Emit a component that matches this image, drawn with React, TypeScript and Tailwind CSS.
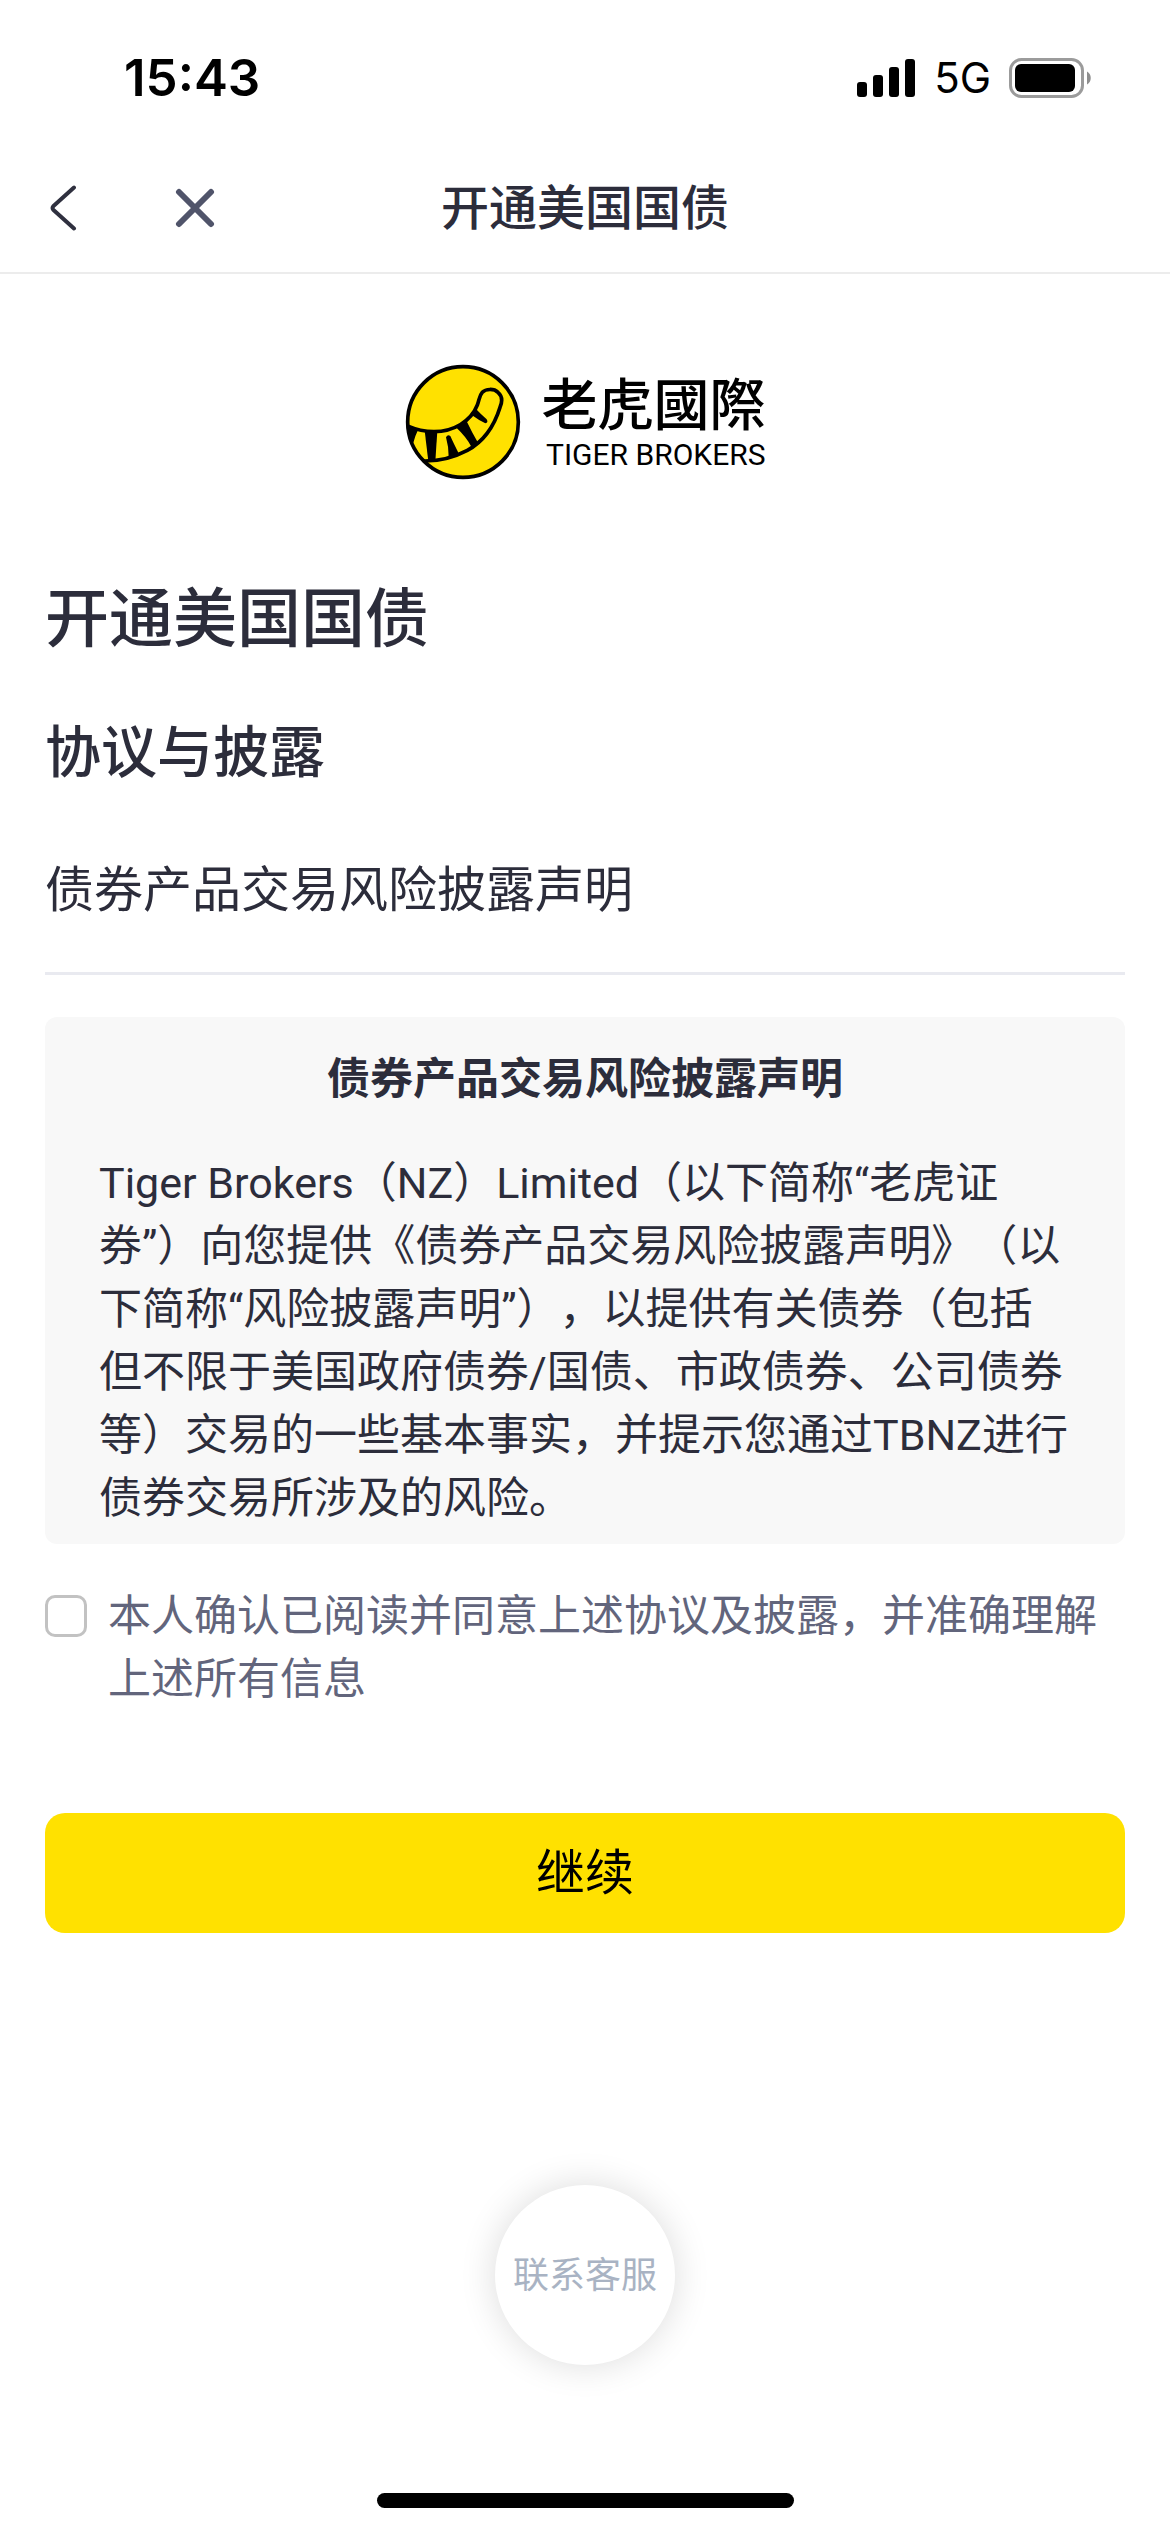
import { useState } from 'react';

const StatusBar = () => (
    <div className="flex h-[144px] items-center justify-between pt-3 pr-[78px] pl-[124px] text-black">
        <span className="text-[51px] leading-[60px] font-semibold">15:43</span>
        <div className="flex items-center gap-[18px]">
            <svg className="h-[38px] w-[59px]" viewBox="0 0 59 38" fill="currentColor">
                <rect x="0" y="23" width="10" height="15" rx="3" />
                <rect x="16" y="16" width="10" height="22" rx="3" />
                <rect x="32" y="8" width="10" height="30" rx="3" />
                <rect x="48" y="0" width="10" height="38" rx="3" />
            </svg>
            <span className="text-[42px] leading-[60px]">5G</span>
            <svg className="h-[40px] w-[83px]" viewBox="0 0 83 40">
                <rect x="1.5" y="1.5" width="72" height="37" rx="11" fill="none" stroke="#9b9b9b" strokeWidth="3" />
                <rect x="6" y="6" width="60" height="28" rx="6" fill="#000" />
                <path d="M78 13.5c5 2.500 5 10.500 0 13z" fill="#8e8e8e" />
            </svg>
        </div>
    </div>
);

const NavBar = () => (
    <header className="grid h-[130px] grid-cols-[1fr_auto_1fr] items-center border-b-2 border-[#ececec]">
        <div className="flex items-center gap-[98px] pl-[49px]">
            <button type="button" aria-label="返回">
                <svg className="h-[46px] w-[28px]" viewBox="0 0 28 46" fill="none" stroke="#2f303f" strokeWidth="4" strokeLinecap="round" strokeLinejoin="round">
                    <path d="M25 2.500 4.500 21Q2.500 23 4.500 25L25 43.500" />
                </svg>
            </button>
            <button type="button" aria-label="关闭">
                <svg className="h-[40px] w-[40px]" viewBox="0 0 40 40" fill="none" stroke="#50546a" strokeWidth="6" strokeLinecap="round">
                    <path d="M4 4 36 36M36 4 4 36" />
                </svg>
            </button>
        </div>
        <span className="text-[48px] leading-[60px] font-medium">开通美国国债</span>
    </header>
);

const Logo = () => (
    <div className="flex items-center justify-center gap-[21px] text-black">
        <svg className="h-[116px] w-[116px]" viewBox="45 70 348 348">
            <clipPath id="coin">
                <circle cx="219" cy="244" r="168" />
            </clipPath>
            <circle cx="219" cy="244" r="166" fill="#ffe100" />
            <g clipPath="url(#coin)">
                <path
                    d="M50 255Q92 273 132 273C190 273 243 242 262 193C268 178 267 166 277 155C287 144 312 143 324 155C338 167 336 186 330 200C312 258 280 303 232 329C190 351 150 362 100 361"
                    fill="none"
                    stroke="#000"
                    strokeWidth="11"
                />
                <path d="M50 250 84 268Q76 284 70 306L56 300Z" />
                <path d="M104 270H142L136 362H115Z" />
                <path d="M168 290Q173 280 181 286Q190 306 206 338L176 348Q176 318 168 290Z" />
                <path d="M200 262 230 242Q244 272 264 306L244 318Q228 288 200 262Z" />
                <path d="M244 216 258 205Q274 222 290 236Q296 246 286 248Q266 238 244 222Z" />
            </g>
            <circle cx="219" cy="244" r="166" fill="none" stroke="#000" strokeWidth="11" />
        </svg>
        <div className="flex flex-col items-end gap-[6px]">
            <span className="font-['Noto_Sans_CJK_TC',sans-serif] text-[56px] leading-[60px] font-medium">老虎國際</span>
            <span className="font-[Roboto,sans-serif] text-[30px] leading-[36px]">TIGER BROKERS</span>
        </div>
    </div>
);

export default function App() {
    const [agreed, setAgreed] = useState(false);

    return (
        <div className="flex min-h-screen flex-col bg-white font-[Inter,'Noto_Sans_CJK_SC',sans-serif] text-[#2c2d3b] [text-spacing-trim:space-all]">
            <StatusBar />
            <NavBar />

            <main className="flex flex-1 flex-col px-[45px] pt-[90px]">
                <Logo />

                <h1 className="mt-[90px] text-[64px] leading-[96px] font-medium">开通美国国债</h1>
                <h2 className="mt-[44px] text-[56px] leading-[84px] font-medium">协议与披露</h2>
                <h3 className="mt-[60px] border-b-[3px] border-[#e9eaf0] pb-[46px] text-[49px] leading-[72px]">
                    债券产品交易风险披露声明
                </h3>

                {/* Disclosure text */}
                <section className="mt-[42px] rounded-xl bg-[#f8f8f8] px-[54px] pt-[30px] pb-[14px] text-[43px] leading-[63px]">
                    <h4 className="text-center font-bold">债券产品交易风险披露声明</h4>
                    <p className="mt-[42px] font-[Roboto,'Noto_Sans_CJK_SC',sans-serif]">
                        Tiger Brokers（NZ）Limited（以下简称“老虎证券”）向您提供《债券产品交易风险披露声明》（以下简称“风险披露声明”），以提供有关债券（包括但不限于美国政府债券/国债、市政债券、公司债券等）交易的一些基本事实，并提示您通过TBNZ进行债券交易所涉及的风险。
                    </p>
                </section>

                <label className="mt-[40px] flex items-start gap-[21px] text-[43px] leading-[63px] text-[#62657c]">
                    <input
                        type="checkbox"
                        checked={agreed}
                        onChange={(e) => setAgreed(e.target.checked)}
                        className="mt-[11px] size-[42px] shrink-0 appearance-none rounded-[10px] border-[3px] border-[#c2c2c2] checked:bg-[#ffe100]"
                    />
                    <span>本人确认已阅读并同意上述协议及披露，并准确理解上述所有信息</span>
                </label>

                <button type="button" className="mt-[103px] h-[120px] rounded-[20px] bg-[#ffe100] text-[49px] text-black">
                    继续
                </button>

                <button
                    type="button"
                    className="mt-[252px] size-[180px] self-center rounded-full bg-white text-[36px] text-[#a9b3c3] shadow-[0_0_36px_rgba(0,0,0,0.14)]"
                >
                    联系客服
                </button>
            </main>

            <div className="mb-6 h-[15px] w-[417px] self-center rounded-full bg-black" />
        </div>
    );
}
